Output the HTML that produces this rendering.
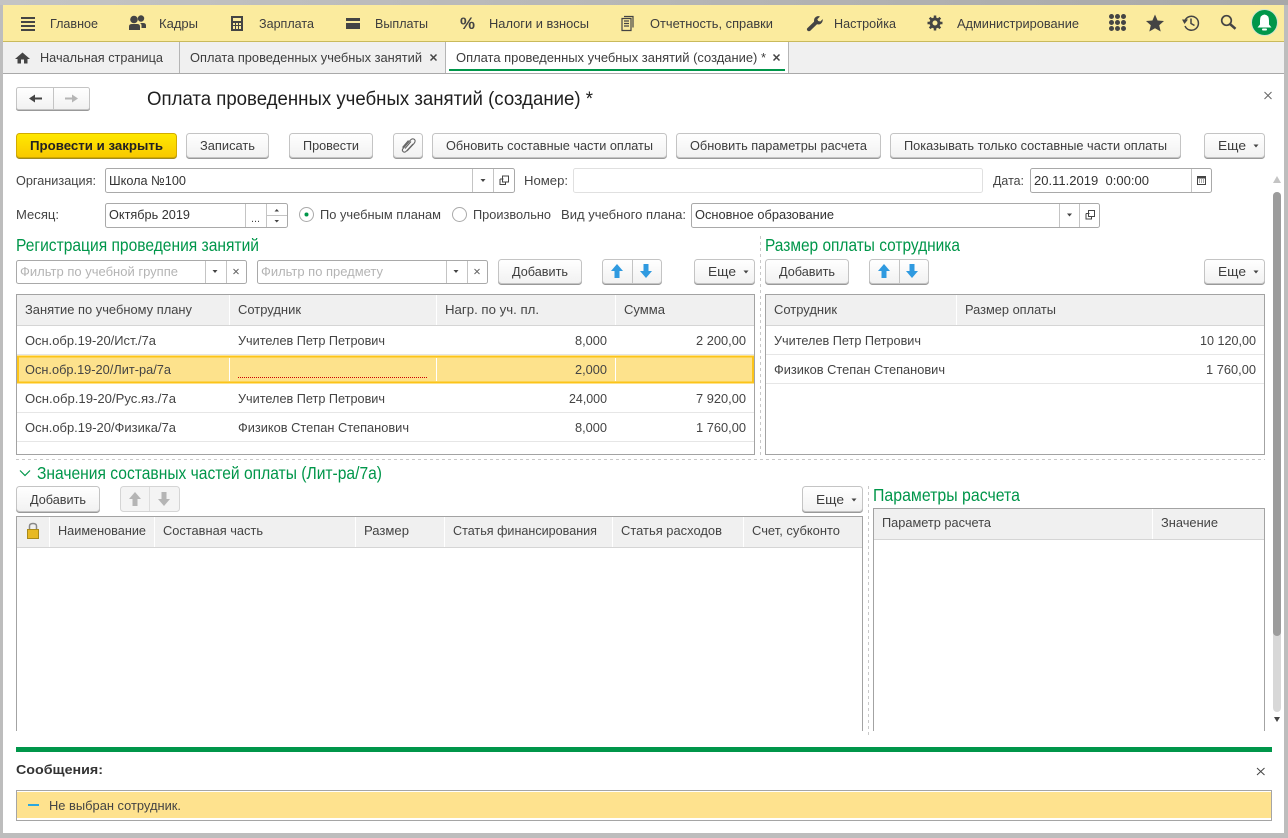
<!DOCTYPE html>
<html lang="ru"><head><meta charset="utf-8"><title>Оплата проведенных учебных занятий (создание)</title>
<style>
html,body{margin:0;padding:0;width:1288px;height:838px;overflow:hidden;background:#fff}
svg{display:block;font-family:"Liberation Sans",Arial,sans-serif;font-size:13.3px}
text{fill:#444;white-space:pre}
.n{fill:#3d3d3d;font-size:13.3px}
.g{fill:#00964a;font-size:17.5px}
.ph{fill:#b4b4b4}
.b{fill:url(#btn);stroke:#c4c4c4;filter:drop-shadow(0 1px 0 #999)}
.f{fill:#fff;stroke:#a9a9a9}
.d{stroke:#c4c4c4;stroke-width:1}
.t{fill:none;stroke:#a3a3a3}
.h{fill:#f0f0f0}
.w{stroke:#fff;stroke-width:1;fill:none}
.r{fill:#e6e6e6}
.i{fill:#444}
.l{stroke:#444;fill:none}
.dash{stroke:#c8c8c8;stroke-dasharray:3 3;fill:none}
</style></head><body>
<svg width="1288" height="838" viewBox="0 0 1288 838" xmlns="http://www.w3.org/2000/svg">
<defs>
<linearGradient id="btn" x1="0" y1="0" x2="0" y2="1"><stop offset="0" stop-color="#fff"/><stop offset="1" stop-color="#f1f1f1"/></linearGradient>
<linearGradient id="yb" x1="0" y1="0" x2="0" y2="1"><stop offset="0" stop-color="#ffe900"/><stop offset="1" stop-color="#f8c800"/></linearGradient>
<linearGradient id="top" x1="0" y1="0" x2="1" y2="0"><stop offset="0" stop-color="#c4c4c4"/><stop offset="1" stop-color="#a8a8a8"/></linearGradient>
<path id="up" d="M0 -7L6 0H2.500V7H-2.500V0H-6Z"/>
<path id="dn" d="M0 7L6 0H2.500V-7H-2.500V0H-6Z"/>
<path id="tri" d="M-2.500 -1.500H2.500L0 1.500Z"/>
<g id="open"><path d="M-4 -1.500H-.5M-4 -1.500V4H1.500V1M-1.500 -4.500H4.500V1.500H-1.500Z" fill="none" stroke="#444" stroke-width="1"/></g>
<g id="x"><path d="M-3.500 -3.500L3.500 3.500M3.500 -3.500L-3.500 3.500" stroke="#666" stroke-width="1" fill="none"/></g>
<g id="xs"><path d="M-2.500 -2.500L2.500 2.500M2.500 -2.500L-2.500 2.500" stroke="#666" stroke-width="1" fill="none"/></g>
</defs>

<!-- frame -->
<rect width="1288" height="838" fill="#bdbdbd"/>
<rect width="1288" height="5" fill="url(#top)"/>
<rect x="3" y="5" width="1281" height="828" fill="#fff"/>
<rect x="3" y="5" width="1281" height="36" fill="#fbeb9e"/>
<rect x="3" y="41" width="1281" height="1" fill="#c9ba5c"/>
<rect x="3" y="42" width="1281" height="31" fill="#f0f0f0"/>
<rect x="3" y="73" width="1281" height="1" fill="#a9a9a9"/>

<!-- nav icons -->
<g class="i">
<rect x="21" y="17" width="14" height="2"/><rect x="21" y="21" width="14" height="2"/><rect x="21" y="25" width="14" height="2"/><rect x="21" y="29" width="14" height="2"/>
<circle cx="134" cy="19.500" r="3.800"/><circle cx="141" cy="18.500" r="3.200"/><path d="M129 30V26.500Q129 24 132 24H137Q140 24 140 26.500V30Z"/><path d="M140 23H143Q146 23 146 25.500V28H141.500V25Q141.500 24 140 23Z"/>
<path fill-rule="evenodd" d="M231 16H243V31H231ZM233 18V21H241V18ZM233 23V25H235V23ZM236 23V25H238V23ZM239 23V25H241V23ZM233 26V29H235V26ZM236 26V29H238V26ZM239 26V29H241V26Z"/>
<path fill-rule="evenodd" d="M346 18H360V29H346ZM346 21V23H360V21Z"/>
</g>
<text x="460" y="29" style="font-size:17px;font-weight:bold;fill:#444" textLength="15" lengthAdjust="spacingAndGlyphs">%</text>
<path class="l" stroke-width="1.200" d="M624 16.500H633V27.500M622 18.500H631V30.500H622ZM624 21H629M624 23.500H629M624 26H629"/>
<path class="i" d="M820 16.500L817.300 19.200L818.200 21L820.300 21.500L822.800 19Q823 23.500 819 24.500L817 24.300L810 31Q807.800 31.800 807 30Q806.500 28.800 807.500 28L814 21.800Q813.500 17 818 16Z"/>
<g transform="translate(935 23)"><circle r="4" fill="none" stroke="#444" stroke-width="3"/><g stroke="#444" stroke-width="2.500"><path d="M0 -7.500V-5M0 5V7.500M-7.500 0H-5M5 0H7.500M-5.300 -5.300L-3.500 -3.500M3.500 3.500L5.300 5.300M5.300 -5.300L3.500 -3.500M-3.500 3.500L-5.300 5.300"/></g></g>
<text class="n" x="50" y="28" textLength="48" lengthAdjust="spacingAndGlyphs">Главное</text>
<text class="n" x="159" y="28" textLength="39" lengthAdjust="spacingAndGlyphs">Кадры</text>
<text class="n" x="259" y="28" textLength="55" lengthAdjust="spacingAndGlyphs">Зарплата</text>
<text class="n" x="375" y="28" textLength="53" lengthAdjust="spacingAndGlyphs">Выплаты</text>
<text class="n" x="489" y="28" textLength="100" lengthAdjust="spacingAndGlyphs">Налоги и взносы</text>
<text class="n" x="650" y="28" textLength="123" lengthAdjust="spacingAndGlyphs">Отчетность, справки</text>
<text class="n" x="834" y="28" textLength="62" lengthAdjust="spacingAndGlyphs">Настройка</text>
<text class="n" x="957" y="28" textLength="122" lengthAdjust="spacingAndGlyphs">Администрирование</text>
<!-- right nav icons -->
<g class="i">
<circle cx="1111.500" cy="16.500" r="2.500"/><circle cx="1117.500" cy="16.500" r="2.500"/><circle cx="1123.500" cy="16.500" r="2.500"/>
<circle cx="1111.500" cy="22.500" r="2.500"/><circle cx="1117.500" cy="22.500" r="2.500"/><circle cx="1123.500" cy="22.500" r="2.500"/>
<circle cx="1111.500" cy="28.500" r="2.500"/><circle cx="1117.500" cy="28.500" r="2.500"/><circle cx="1123.500" cy="28.500" r="2.500"/>
<path d="M1155 14.500L1157.600 20.500L1164 21L1159.200 25.200L1160.700 31.500L1155 28.200L1149.300 31.500L1150.800 25.200L1146 21L1152.400 20.500Z"/>
</g>
<path class="l" stroke-width="1.500" d="M1185 20.500A7 7 0 1 1 1185 26M1191 18.500V23.500L1194.500 25.500"/>
<path class="i" d="M1182 19.500L1188 19.500L1184.500 24Z"/>
<circle cx="1226.500" cy="20.500" r="4.800" fill="none" stroke="#444" stroke-width="1.700"/>
<path d="M1230 24L1235.500 28.800" stroke="#444" stroke-width="2.500"/>
<circle cx="1264.500" cy="22.500" r="13" fill="#00964a" stroke="#cfe3d0" stroke-width="1"/>
<path d="M1264.500 14.500Q1269 15 1269 20.500V24.500L1271.500 27.500H1257.500L1260 24.500V20.500Q1260 15 1264.500 14.500Z" fill="#fff"/><rect x="1262" y="28.500" width="5" height="2" rx="1" fill="#fff"/>

<!-- tabs -->
<path class="i" d="M22.500 52.500L30 59H27.500V63.500H24V59.500H21V63.500H17.500V59H15Z"/>
<text x="40" y="62" class="n" textLength="123" lengthAdjust="spacingAndGlyphs">Начальная страница</text>
<rect x="179" y="42" width="1" height="31" fill="#b5b5b5"/>
<text x="190" y="62" class="n" textLength="232" lengthAdjust="spacingAndGlyphs">Оплата проведенных учебных занятий</text>
<path d="M430.500 54.500L436.500 60.500M436.500 54.500L430.500 60.500" stroke="#444" stroke-width="1.500"/>
<rect x="446" y="42" width="342" height="31" fill="#fff"/>
<rect x="445" y="42" width="1" height="31" fill="#b5b5b5"/>
<rect x="788" y="42" width="1" height="31" fill="#b5b5b5"/>
<text x="456" y="62" class="n" textLength="310" lengthAdjust="spacingAndGlyphs">Оплата проведенных учебных занятий (создание) *</text>
<path d="M773.500 54.500L779.500 60.500M779.500 54.500L773.500 60.500" stroke="#444" stroke-width="1.500"/>
<rect x="449" y="69" width="336" height="2" fill="#00964a"/>

<!-- title -->
<rect class="b" x="16.500" y="87.500" width="73" height="22" rx="2"/>
<line class="d" x1="53.500" y1="88" x2="53.500" y2="109"/>
<path class="i" d="M29 98.500L35 94.500V97.500H42V99.500H35V102.500Z"/>
<path d="M78 98.500L72 94.500V97.500H65V99.500H72V102.500Z" fill="#b5b5b5"/>
<text x="147" y="105" style="font-size:19.500px;fill:#1e1e1e" textLength="446" lengthAdjust="spacingAndGlyphs">Оплата проведенных учебных занятий (создание) *</text>
<use href="#x" x="1268" y="95.500"/>

<!-- toolbar -->
<rect x="16.500" y="133.500" width="160" height="24" rx="3" fill="url(#yb)" stroke="#d2ab00" style="filter:drop-shadow(0 1px 0 #a08a20)"/>
<text x="30" y="150" style="font-weight:bold;font-size:13.300px;fill:#222" textLength="133" lengthAdjust="spacingAndGlyphs">Провести и закрыть</text>
<rect class="b" x="186.500" y="133.500" width="82" height="24" rx="3"/>
<text class="n" x="200" y="150" textLength="55" lengthAdjust="spacingAndGlyphs">Записать</text>
<rect class="b" x="289.500" y="133.500" width="83" height="24" rx="3"/>
<text class="n" x="303" y="150" textLength="56" lengthAdjust="spacingAndGlyphs">Провести</text>
<rect class="b" x="393.500" y="133.500" width="29" height="24" rx="3"/>
<path d="M413 144L406.500 151Q404.500 153 403 151.500Q401.500 150 403.500 148L410.500 140Q412.500 138 414.500 139.500Q416 141 414 143.500L407 151M411 141.500L405 148.500M408.500 140.500L402.500 147.500" stroke="#666" stroke-width="1.100" fill="none"/>
<rect class="b" x="432.500" y="133.500" width="234" height="24" rx="3"/>
<text class="n" x="446" y="150" textLength="207" lengthAdjust="spacingAndGlyphs">Обновить составные части оплаты</text>
<rect class="b" x="676.500" y="133.500" width="204" height="24" rx="3"/>
<text class="n" x="690" y="150" textLength="177" lengthAdjust="spacingAndGlyphs">Обновить параметры расчета</text>
<rect class="b" x="890.500" y="133.500" width="290" height="24" rx="3"/>
<text class="n" x="904" y="150" textLength="263" lengthAdjust="spacingAndGlyphs">Показывать только составные части оплаты</text>
<rect class="b" x="1204.500" y="133.500" width="60" height="24" rx="3"/>
<text class="n" x="1218" y="150" textLength="28" lengthAdjust="spacingAndGlyphs">Еще</text>
<use href="#tri" x="1256" y="146" class="i"/>

<!-- row 1 -->
<text x="16" y="185" textLength="80" lengthAdjust="spacingAndGlyphs">Организация:</text>
<rect class="f" x="105.500" y="168.500" width="409" height="24" rx="2"/>
<line class="d" x1="472.500" y1="169" x2="472.500" y2="192"/><line class="d" x1="493.500" y1="169" x2="493.500" y2="192"/>
<text x="109" y="185" style="fill:#333" textLength="77" lengthAdjust="spacingAndGlyphs">Школа №100</text>
<use href="#tri" x="483" y="180.500" class="i"/><use href="#open" x="504" y="180.500"/>
<text x="524" y="185" textLength="44" lengthAdjust="spacingAndGlyphs">Номер:</text>
<rect x="573.500" y="168.500" width="409" height="24" rx="2" fill="#fff" stroke="#e0e0e0"/>
<text x="993" y="185" textLength="31" lengthAdjust="spacingAndGlyphs">Дата:</text>
<rect class="f" x="1030.500" y="168.500" width="181" height="24" rx="2"/>
<line class="d" x1="1191.500" y1="169" x2="1191.500" y2="192"/>
<text x="1034" y="185" style="fill:#333" textLength="115" lengthAdjust="spacingAndGlyphs">20.11.2019  0:00:00</text>
<path class="i" fill-rule="evenodd" d="M1197 176H1206V185H1197ZM1198 178.500V184H1205V178.500Z"/>
<path d="M1199 180H1200M1201 180H1202M1203 180H1204M1199 182H1200M1201 182H1202M1203 182H1204" stroke="#555"/>

<!-- row 2 -->
<text x="16" y="219" textLength="43" lengthAdjust="spacingAndGlyphs">Месяц:</text>
<rect class="f" x="105.500" y="203.500" width="182" height="24" rx="2"/>
<line class="d" x1="245.500" y1="204" x2="245.500" y2="227"/><line class="d" x1="266.500" y1="204" x2="266.500" y2="227"/><line class="d" x1="267" y1="215.500" x2="287" y2="215.500"/>
<text x="109" y="219" style="fill:#333" textLength="81" lengthAdjust="spacingAndGlyphs">Октябрь 2019</text>
<text x="251" y="222" style="font-size:11px" textLength="9" lengthAdjust="spacingAndGlyphs">...</text>
<path class="i" d="M274.500 211.500H279L276.750 209ZM274.500 220H279L276.750 222.500Z"/>
<circle cx="306.500" cy="214.500" r="7" fill="#fff" stroke="#aaa"/><circle cx="306.500" cy="214.500" r="2" fill="#00964a"/>
<text x="320" y="219" textLength="121" lengthAdjust="spacingAndGlyphs">По учебным планам</text>
<circle cx="459.500" cy="214.500" r="7" fill="#fff" stroke="#aaa"/>
<text x="473" y="219" textLength="78" lengthAdjust="spacingAndGlyphs">Произвольно</text>
<text x="561" y="219" textLength="125" lengthAdjust="spacingAndGlyphs">Вид учебного плана:</text>
<rect class="f" x="691.500" y="203.500" width="408" height="24" rx="2"/>
<line class="d" x1="1059.500" y1="204" x2="1059.500" y2="227"/><line class="d" x1="1079.500" y1="204" x2="1079.500" y2="227"/>
<text x="695" y="219" style="fill:#333" textLength="139" lengthAdjust="spacingAndGlyphs">Основное образование</text>
<use href="#tri" x="1069.500" y="215" class="i"/><use href="#open" x="1090" y="215"/>

<!-- scrollbar -->
<path d="M1277 176L1281 183H1273Z" fill="#c4c4c4"/>
<rect x="1273" y="192" width="8" height="520" rx="4" fill="#d8d8d8"/>
<rect x="1273" y="192" width="8" height="444" rx="4" fill="#9c9c9c"/>
<path d="M1274 717H1280L1277 722Z" fill="#444"/>

<!-- section headings -->
<text class="g" x="16" y="251" textLength="243" lengthAdjust="spacingAndGlyphs">Регистрация проведения занятий</text>
<text class="g" x="765" y="251" textLength="195" lengthAdjust="spacingAndGlyphs">Размер оплаты сотрудника</text>
<line class="dash" x1="760.500" y1="236" x2="760.500" y2="456"/>

<!-- filters -->
<rect class="f" x="16.500" y="260.500" width="230" height="23" rx="2" stroke="#b5b5b5"/>
<line class="d" x1="205.500" y1="261" x2="205.500" y2="283"/><line class="d" x1="226.500" y1="261" x2="226.500" y2="283"/>
<text class="ph" x="20" y="276" textLength="158" lengthAdjust="spacingAndGlyphs">Фильтр по учебной группе</text>
<use href="#tri" x="215" y="271.500" class="i"/><use href="#xs" x="236" y="271.500"/>
<rect class="f" x="257.500" y="260.500" width="230" height="23" rx="2" stroke="#b5b5b5"/>
<line class="d" x1="446.500" y1="261" x2="446.500" y2="283"/><line class="d" x1="467.500" y1="261" x2="467.500" y2="283"/>
<text class="ph" x="261" y="276" textLength="122" lengthAdjust="spacingAndGlyphs">Фильтр по предмету</text>
<use href="#tri" x="456" y="271.500" class="i"/><use href="#xs" x="477" y="271.500"/>
<rect class="b" x="498.500" y="259.500" width="83" height="24" rx="3"/>
<text class="n" x="512" y="276" textLength="56" lengthAdjust="spacingAndGlyphs">Добавить</text>
<rect class="b" x="602.500" y="259.500" width="59" height="24" rx="3"/><line class="d" x1="632.500" y1="260" x2="632.500" y2="283"/>
<use href="#up" x="617" y="271" fill="#2f9ae0"/><use href="#dn" x="646" y="271" fill="#2f9ae0"/>
<rect class="b" x="694.500" y="259.500" width="60" height="24" rx="3"/>
<text class="n" x="708" y="276" textLength="28" lengthAdjust="spacingAndGlyphs">Еще</text>
<use href="#tri" x="746" y="272" class="i"/>
<rect class="b" x="765.500" y="259.500" width="83" height="24" rx="3"/>
<text class="n" x="779" y="276" textLength="56" lengthAdjust="spacingAndGlyphs">Добавить</text>
<rect class="b" x="869.500" y="259.500" width="59" height="24" rx="3"/><line class="d" x1="899.500" y1="260" x2="899.500" y2="283"/>
<use href="#up" x="884" y="271" fill="#2f9ae0"/><use href="#dn" x="912" y="271" fill="#2f9ae0"/>
<rect class="b" x="1204.500" y="259.500" width="60" height="24" rx="3"/>
<text class="n" x="1218" y="276" textLength="28" lengthAdjust="spacingAndGlyphs">Еще</text>
<use href="#tri" x="1256" y="272" class="i"/>

<!-- table 1 -->
<rect class="h" x="17" y="295" width="737" height="30"/>
<rect x="17" y="325" width="737" height="1" fill="#d5d5d5"/>
<path class="w" d="M229.500 295V325M436.500 295V325M615.500 295V325"/>
<rect class="r" x="17" y="354" width="737" height="1"/><rect class="r" x="17" y="412" width="737" height="1"/><rect class="r" x="17" y="441" width="737" height="1"/>
<text x="25" y="314" textLength="167" lengthAdjust="spacingAndGlyphs">Занятие по учебному плану</text>
<text x="238" y="314" textLength="63" lengthAdjust="spacingAndGlyphs">Сотрудник</text>
<text x="445" y="314" textLength="94" lengthAdjust="spacingAndGlyphs">Нагр. по уч. пл.</text>
<text x="624" y="314" textLength="41" lengthAdjust="spacingAndGlyphs">Сумма</text>

<text x="25" y="345" textLength="131" lengthAdjust="spacingAndGlyphs">Осн.обр.19-20/Ист./7а</text>
<text x="238" y="345" textLength="147" lengthAdjust="spacingAndGlyphs">Учителев Петр Петрович</text>
<text x="575" y="345" textLength="32" lengthAdjust="spacingAndGlyphs">8,000</text>
<text x="696" y="345" textLength="50" lengthAdjust="spacingAndGlyphs">2 200,00</text>

<rect x="18" y="356.500" width="735" height="26" fill="#fde28c" stroke="#fcc419" stroke-width="2"/>
<path d="M229.500 358V381M436.500 358V381M615.500 358V381" stroke="#fff"/>
<line x1="238" y1="377.500" x2="427" y2="377.500" stroke="#c00" stroke-width="1" stroke-dasharray="1 1"/>
<text x="25" y="374" textLength="146" lengthAdjust="spacingAndGlyphs">Осн.обр.19-20/Лит-ра/7а</text>
<text x="575" y="374" textLength="32" lengthAdjust="spacingAndGlyphs">2,000</text>

<text x="25" y="403" textLength="151" lengthAdjust="spacingAndGlyphs">Осн.обр.19-20/Рус.яз./7а</text>
<text x="238" y="403" textLength="147" lengthAdjust="spacingAndGlyphs">Учителев Петр Петрович</text>
<text x="569" y="403" textLength="38" lengthAdjust="spacingAndGlyphs">24,000</text>
<text x="696" y="403" textLength="50" lengthAdjust="spacingAndGlyphs">7 920,00</text>

<text x="25" y="432" textLength="151" lengthAdjust="spacingAndGlyphs">Осн.обр.19-20/Физика/7а</text>
<text x="238" y="432" textLength="171" lengthAdjust="spacingAndGlyphs">Физиков Степан Степанович</text>
<text x="575" y="432" textLength="32" lengthAdjust="spacingAndGlyphs">8,000</text>
<text x="696" y="432" textLength="50" lengthAdjust="spacingAndGlyphs">1 760,00</text>
<rect class="t" x="16.500" y="294.500" width="738" height="160"/>

<!-- table 2 -->
<rect class="h" x="766" y="295" width="498" height="30"/>
<rect x="766" y="325" width="498" height="1" fill="#d5d5d5"/>
<line class="w" x1="956.500" y1="295" x2="956.500" y2="325"/>
<rect class="r" x="766" y="354" width="498" height="1"/><rect class="r" x="766" y="383" width="498" height="1"/>
<text x="774" y="314" textLength="63" lengthAdjust="spacingAndGlyphs">Сотрудник</text>
<text x="965" y="314" textLength="91" lengthAdjust="spacingAndGlyphs">Размер оплаты</text>
<text x="774" y="345" textLength="147" lengthAdjust="spacingAndGlyphs">Учителев Петр Петрович</text>
<text x="1200" y="345" textLength="56" lengthAdjust="spacingAndGlyphs">10 120,00</text>
<text x="774" y="374" textLength="171" lengthAdjust="spacingAndGlyphs">Физиков Степан Степанович</text>
<text x="1206" y="374" textLength="50" lengthAdjust="spacingAndGlyphs">1 760,00</text>
<rect class="t" x="765.500" y="294.500" width="499" height="160"/>

<line class="dash" x1="16" y1="459.500" x2="1265" y2="459.500"/>

<!-- lower section -->
<path d="M20 470.500L25 475.500L30 470.500" fill="none" stroke="#00964a" stroke-width="1.200"/>
<text class="g" x="37" y="479" textLength="345" lengthAdjust="spacingAndGlyphs">Значения составных частей оплаты (Лит-ра/7а)</text>
<rect class="b" x="16.500" y="486.500" width="83" height="25" rx="3"/>
<text class="n" x="30" y="504" textLength="56" lengthAdjust="spacingAndGlyphs">Добавить</text>
<rect x="120.500" y="486.500" width="59" height="25" rx="3" fill="#f4f4f4" stroke="#d5d5d5"/><line x1="149.500" y1="487" x2="149.500" y2="511" stroke="#ddd"/>
<use href="#up" x="135" y="499" fill="#b5b5b5"/><use href="#dn" x="164" y="499" fill="#b5b5b5"/>
<rect class="b" x="802.500" y="486.500" width="60" height="25" rx="3"/>
<text class="n" x="816" y="504" textLength="28" lengthAdjust="spacingAndGlyphs">Еще</text>
<use href="#tri" x="854" y="500" class="i"/>
<line class="dash" x1="868.500" y1="486" x2="868.500" y2="736"/>
<text class="g" x="873" y="501" textLength="147" lengthAdjust="spacingAndGlyphs">Параметры расчета</text>

<rect class="h" x="17" y="517" width="846" height="30"/>
<rect x="17" y="547" width="846" height="1" fill="#d5d5d5"/>
<path class="w" d="M49.500 517V547M154.500 517V547M355.500 517V547M444.500 517V547M612.500 517V547M743.500 517V547"/>
<path d="M16.500 731V516.500H862.500V731" class="t"/>
<rect x="27.500" y="529.500" width="11" height="9" fill="#e8b923" stroke="#a98a1a"/>
<path d="M29.500 529V526Q29.500 523.500 33 523.500Q36.500 523.500 36.500 526V529" fill="none" stroke="#888" stroke-width="1.500"/>
<text x="58" y="535" textLength="88" lengthAdjust="spacingAndGlyphs">Наименование</text>
<text x="163" y="535" textLength="100" lengthAdjust="spacingAndGlyphs">Составная часть</text>
<text x="364" y="535" textLength="45" lengthAdjust="spacingAndGlyphs">Размер</text>
<text x="453" y="535" textLength="144" lengthAdjust="spacingAndGlyphs">Статья финансирования</text>
<text x="621" y="535" textLength="101" lengthAdjust="spacingAndGlyphs">Статья расходов</text>
<text x="752" y="535" textLength="88" lengthAdjust="spacingAndGlyphs">Счет, субконто</text>

<rect class="h" x="874" y="509" width="390" height="30"/>
<rect x="874" y="539" width="390" height="1" fill="#d5d5d5"/>
<line class="w" x1="1152.500" y1="509" x2="1152.500" y2="539"/>
<path d="M873.500 731V508.500H1264.500V731" class="t"/>
<text x="882" y="527" textLength="109" lengthAdjust="spacingAndGlyphs">Параметр расчета</text>
<text x="1161" y="527" textLength="57" lengthAdjust="spacingAndGlyphs">Значение</text>

<!-- messages -->
<rect x="16" y="747" width="1256" height="5" fill="#00964a"/>
<text x="16" y="774" style="font-weight:bold;font-size:13.300px;fill:#333" textLength="87" lengthAdjust="spacingAndGlyphs">Сообщения:</text>
<path d="M1257 768L1264.500 775M1264.500 768L1257 775" stroke="#444" stroke-width="1" fill="none"/>
<rect x="16.500" y="790.500" width="1255" height="30" fill="#fff" stroke="#a5a5a5"/>
<rect x="17" y="792" width="1254" height="26" fill="#fee28e"/>
<rect x="28" y="804" width="11" height="2" fill="#2aa8e0"/>
<text x="49" y="810" textLength="132" lengthAdjust="spacingAndGlyphs">Не выбран сотрудник.</text>
</svg>
</body></html>
